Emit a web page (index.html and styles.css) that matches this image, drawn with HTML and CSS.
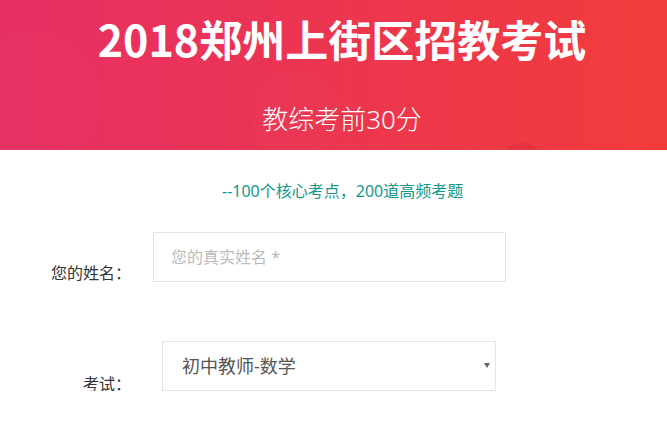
FILE: index.html
```html
<!DOCTYPE html>
<html lang="zh-CN">
<head>
    <meta charset="UTF-8">
    <meta name="viewport" content="width=device-width, initial-scale=1.0">
    <title>2018郑州上街区招教考试</title>
    <link rel="stylesheet" href="styles.css">
</head>
<body>
    <!-- banner -->
    <div class="banner">
        <span class="bubble bubble-left"></span>
        <span class="bubble bubble-mid"></span>
        <span class="bubble bubble-bottom"></span>
        <h1 class="banner-title">2018郑州上街区招教考试</h1>
        <p class="banner-sub">教综考前30分</p>
    </div>

    <p class="slogan">--100个核心考点，200道高频考题</p>

    <!-- sign up form -->
    <form class="signup">
        <div class="row row-name">
            <label for="name">您的姓名：</label>
            <input type="text" id="name" placeholder="您的真实姓名 *">
        </div>
        <div class="row row-exam">
            <label for="exam">考试：</label>
            <div class="select-wrap">
                <select id="exam">
                    <option>初中教师-数学</option>
                    <option>初中教师-语文</option>
                    <option>初中教师-英语</option>
                </select>
                <span class="arrow"></span>
            </div>
        </div>
    </form>
</body>
</html>
```

FILE: styles.css
```css
body {
    margin: 0;
    font-family: "Noto Sans", "Noto Sans CJK SC", sans-serif;
    background: #fff;
    color: #333;
}
.banner {
    position: relative;
    overflow: hidden;
    height: 150px;
    padding-left: 17px;
    background: linear-gradient(to right, #e62f64, #f23c3b);
    text-align: center;
    color: #fff;
}
.bubble {
    position: absolute;
    border-radius: 50%;
    background: rgba(255, 255, 255, 0.012);
}
.bubble-left {
    width: 140px;
    height: 140px;
    left: -40px;
    top: 30px;
}
.bubble-mid {
    width: 90px;
    height: 90px;
    left: 250px;
    top: 70px;
}
.bubble-bottom {
    width: 50px;
    height: 50px;
    left: 497px;
    top: 143px;
    background: rgba(170, 20, 50, 0.15);
}
.banner-title {
    position: relative;
    margin: 0;
    padding-top: 8px;
    font-family: "Noto Sans CJK SC", sans-serif;
    font-size: 43px;
    line-height: 60px;
    font-weight: 700;
}
.banner-sub {
    position: relative;
    margin: 34px 0 0;
    font-size: 26px;
    line-height: 34px;
    font-weight: 300;
}
.slogan {
    margin: 29px 0 0;
    padding-left: 222px;
    font-size: 16px;
    line-height: 24px;
    color: #12998a;
}
.signup {
    margin-top: 29px;
}
.row {
    display: flex;
    align-items: flex-end;
}
.row label {
    width: 131px;
    text-align: right;
    font-family: "Noto Sans CJK SC", sans-serif;
    font-size: 16px;
    line-height: 20px;
    color: #333;
}
.row input,
.row select {
    box-sizing: border-box;
    height: 50px;
    border: 1px solid #e4e4e4;
    background: #fff;
    font-family: inherit;
    outline: none;
}
.row-name label {
    margin-bottom: 0;
}
.row-name input {
    margin-left: 22px;
    width: 353px;
    padding: 0 17px;
    font-size: 16px;
    color: #333;
}
.row-name input::placeholder {
    color: #bbb;
}
.row-exam {
    margin-top: 59px;
}
.row-exam label {
    margin-bottom: -2px;
}
.select-wrap {
    position: relative;
    margin-left: 31px;
}
.row-exam select {
    width: 334px;
    padding: 0 19px;
    font-size: 18px;
    color: #555;
    appearance: none;
    -webkit-appearance: none;
    border-radius: 0;
}
.arrow {
    position: absolute;
    right: 6px;
    top: 22px;
    width: 0;
    height: 0;
    border-left: 3px solid transparent;
    border-right: 3px solid transparent;
    border-top: 5px solid #666;
}
```
